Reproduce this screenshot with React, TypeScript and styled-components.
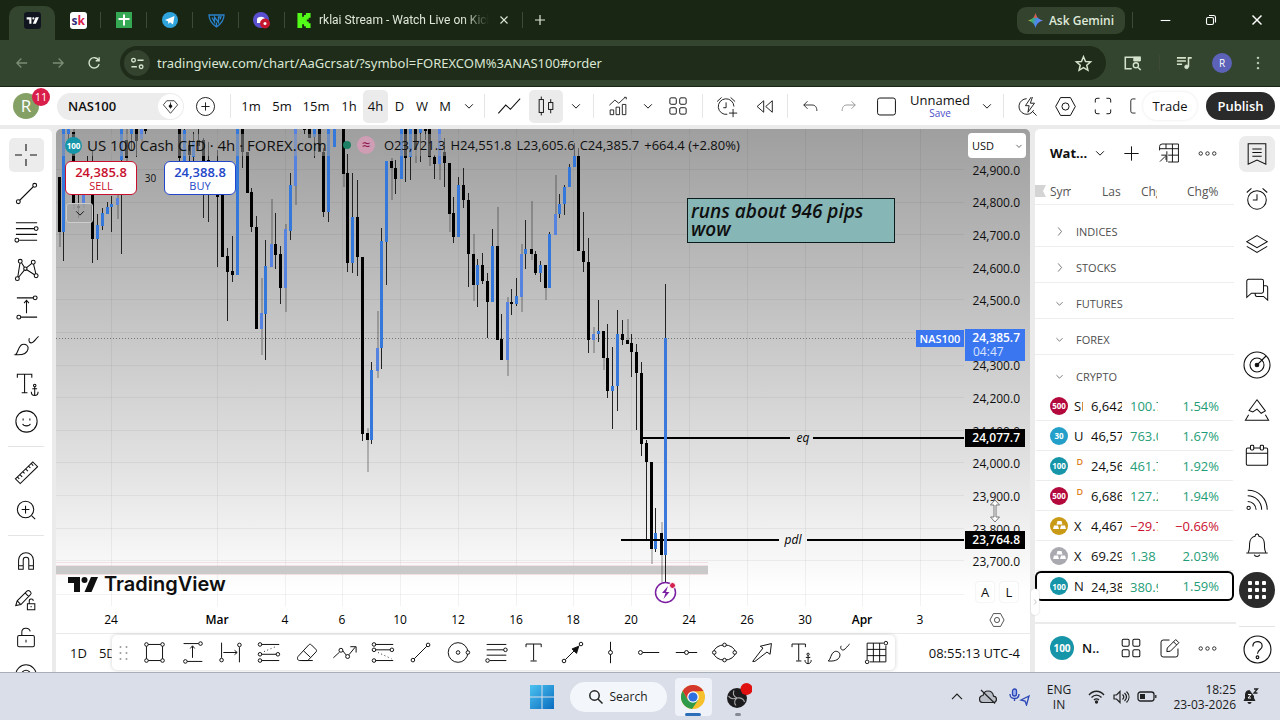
import React from "react";
import styled, { createGlobalStyle } from "styled-components";

const Global = createGlobalStyle`
  *, *::before, *::after { box-sizing: border-box; }
  html, body { margin: 0; padding: 0; }
  body { font-family: "Open Sans", "Noto Sans", sans-serif; color: #0f0f0f; background: #ebebeb; }
  button, select, input { font: inherit; color: inherit; }
  h1, h2, p { margin: 0; font: inherit; }
`;

/* ---------- shared parts ---------- */

const Shell = styled.div`
  height: 100vh;
  display: flex;
  flex-direction: column;
  overflow: hidden;
`;

const PlainButton = styled.button`
  display: inline-flex;
  align-items: center;
  justify-content: center;
  padding: 0;
  border: 0;
  background: none;
  flex: none;
`;

const Spacer = styled.div`
  flex: 1;
`;

const Glyph = styled.svg<{ $w: number }>`
  display: block;
  flex: none;
  width: ${(p) => p.$w}px;
  height: ${(p) => p.$w}px;
  fill: none;
  stroke: currentColor;
  stroke-width: 1.1;
  overflow: visible;
`;

const shapes: Record<string, React.ReactNode> = {
  cross: <path d="M14 3v7M14 18v7M3 14h7M18 14h7" />,
  trend: <><circle cx="5.5" cy="22.5" r="2" /><circle cx="22.5" cy="5.500" r="2" /><path d="M7 21 21 7" /></>,
  fib: <><path d="M3 5h22M3 11h19M3 17h22M6.500 23h18.500" /><circle cx="24" cy="11" r="2" /><circle cx="4" cy="23" r="2" /></>,
  pattern: <><path d="M5 21.500 7.200 7.500M9 7.200l2.800 4.500M11.800 14.700 5.800 22M14.200 12l5.300-4.300M21.300 8.500 23.700 18.500M14.300 14.200l8 5.200" /><circle cx="7.500" cy="5.500" r="2" /><circle cx="21" cy="6.500" r="2" /><circle cx="12.800" cy="13.200" r="1.700" /><circle cx="4.500" cy="23.500" r="2" /><circle cx="24" cy="20.500" r="2" /></>,
  measure: <><path d="M4 4h17M14 7v13M11.500 9.500 14 6.500l2.500 3M8 24h17" /><circle cx="23" cy="4" r="2" /><circle cx="6" cy="24" r="2" /></>,
  hmeasure: <><path d="M4 3v17M24 8v17M6 14h15M18.500 11.500 21.500 14l-3 2.500" /><circle cx="4" cy="22.500" r="2" /><circle cx="24" cy="5.500" r="2" /></>,
  brush: <><path d="M2.500 23.500c3-1.500 2.500-8.500 7-10.500 3.500-1.300 7 1.500 6 5-1.300 5-7.500 6-13 5.500ZM17 6.500c-1.500 3 .5 5.500 3 4.500 2.500-1.200 3.500-4 6.500-6.500" /></>,
  text: <path d="M4.500 8V4.500h17V8M13 4.500V23M9.500 23.500h7" />,
  textAnchor: <><path d="M4.500 8V4.500h15V8M12 4.500V23M9 23.500h6" /><path d="M22.500 17.500v9M20 19.500h5M19 22.500c0 2.500 1.500 4 3.500 4s3.500-1.500 3.500-4" /><circle cx="22.500" cy="16" r="1.300" /></>,
  smile: <><circle cx="14" cy="14" r="11" /><path d="M10 16.500c1 2.700 7 2.700 8 0M10.500 11v2M17.500 11v2" /></>,
  ruler: <><path d="m2.500 20.500 18-17.500 5 5-18 17.500ZM7 16l2.500 2.500M10 13l2 2M13 10.200l2.500 2.500M16 7.300l2 2M4.500 18.500l2 2M19 4.500 21 7" /></>,
  zoom: <><circle cx="13" cy="13" r="8.500" /><path d="M13 9v8M9 13h8M19.500 19.500 23 23" /></>,
  magnet: <path d="M6 23V13a8 8 0 0 1 16 0v10h-5V13a3 3 0 0 0-6 0v10ZM6 19h5M17 19h5" />,
  pencilLock: <><path d="m3 21 1.500-5L15 5.500c1-1 2-1 3 0l.8.8c1 1 1 2 0 3L8.500 20 3 21ZM13 7.500l4 4M4.500 16 8 19.500" /><path d="M15.500 19h8v6.500h-8ZM17.500 19v-2.500a2.200 2.200 0 0 1 4.400-.5M19.500 21.500v1.500" /></>,
  lock: <><rect x="5" y="12.500" width="18" height="12" rx="1.500" /><path d="M9.500 12.500V8.500c0-5 8-5.500 9-.500M14 17v3" /></>,
  eye: <><circle cx="14" cy="14" r="11" /><circle cx="14" cy="14" r="5" /></>,
  chevron: <path d="m9.500 12 4.500 4.500 4.500-4.500" />,
  chevronRight: <path d="m12 8 5 6-5 6" />,
  chevronUp: <path d="m7 17 7-7 7 7" strokeWidth="1.600" />,
  plusCircle: <><circle cx="14" cy="14" r="11" /><path d="M14 9v10M9 14h10" /></>,
  plus: <path d="M14 6v16M6 14h16" />,
  gem: <><path d="M8.500 5.500h11l5 6L14 24 3.500 11.500ZM14 8v9" /><circle cx="14" cy="13.500" r="2" fill="currentColor" /></>,
  line: <path d="m2.500 22 8-9 5 4.500L26 6" />,
  candles: <><path d="M8.500 3v3.500M8.500 21.500V25M19.500 6v4M19.500 18v4.500" /><rect x="6" y="6.500" width="5" height="15" /><rect x="17" y="10" width="5" height="8" /></>,
  indicators: <><path d="M3 13 10 6.500l5 4L23 3M22 3h2.500v2.500" /><path d="M4 25v-6h4.500v6ZM11.500 25v-9.500H16V25ZM19.500 25V12H24v13Z" /></>,
  grid: <><rect x="4.500" y="4.500" width="7.500" height="7.500" rx="1.500" /><rect x="16" y="4.500" width="7.500" height="7.500" rx="1.500" /><rect x="4.500" y="16" width="7.500" height="7.500" rx="1.500" /><rect x="16" y="16" width="7.500" height="7.500" rx="1.500" /></>,
  alarm: <><circle cx="14" cy="15" r="10" /><path d="M14 9v6H9.500M3 7l5-4.500M25 7l-5-4.500" /></>,
  alarmPlus: <><path d="M23 14a9.500 9.500 0 1 0-8 9.500M13.500 9v6.500H10M2.500 8 8 3M24.500 8 19 3M22 17v10M17 22h10" /></>,
  rewind: <path d="M13 7v14L5 14ZM23.500 7v14l-8-7Z" />,
  undo: <path d="M10 7 5 12l5 5M5 12h11c4.500 0 6.500 3 6.500 8" />,
  redo: <path d="m18 7 5 5-5 5M23 12H12c-4.500 0-6.500 3-6.500 8" />,
  square: <rect x="4" y="4.500" width="20" height="19" rx="2.500" />,
  quick: <><path d="M13 4.500a9.500 9.500 0 1 0 8.500 14M20 20l5 5" /><path d="M18.500 2.500 11.500 13h4.500l-1.500 8 8-11h-5l2.500-7.500" /></>,
  hex: <><path d="M8.500 4h11L25 14l-5.500 10h-11L3 14Z" /><circle cx="14" cy="14" r="4" /></>,
  full: <path d="M5 10V7a2 2 0 0 1 2-2h3M18 5h3a2 2 0 0 1 2 2v3M23 18v3a2 2 0 0 1-2 2h-3M10 23H7a2 2 0 0 1-2-2v-3" />,
  camera: <path d="M21 5h-3.500A2.500 2.500 0 0 0 15 7.500v13a2.500 2.500 0 0 0 2.500 2.500H21" />,
  rect: <><path d="M7 5h14M7 23h14M5 7v14M23 7v14" /><circle cx="5" cy="5" r="2" /><circle cx="23" cy="5" r="2" /><circle cx="5" cy="23" r="2" /><circle cx="23" cy="23" r="2" /></>,
  longPos: <><path d="M6 5h20M6 16h17M6 23h20" /><path d="m9 13 14-6" strokeDasharray="1 3" /><circle cx="4.500" cy="5" r="2" /><circle cx="4.500" cy="16" r="2" /><circle cx="24.500" cy="16" r="2" /><circle cx="4.500" cy="23" r="2" /></>,
  shortPos: <><path d="M6 5h20M6 11h17M6 23h20" /><path d="m9 14 15 7" strokeDasharray="1 3" /><circle cx="4.500" cy="5" r="2" /><circle cx="4.500" cy="11" r="2" /><circle cx="24.500" cy="11" r="2" /><circle cx="4.500" cy="23" r="2" /></>,
  eraser: <path d="m4.500 18.500 12-13c1-1 2-1 3 0l5 5c1 1 1 2 0 3l-9 9.500H6.500c-3 0-3-3-2-4.500ZM10.500 12l8 7.500M9 23h12" />,
  path: <><path d="m1.500 20 7-6.500M12 12l4 5M19 16.500 26 8M20.500 7.500H27V14" /><circle cx="10" cy="11.500" r="2.200" /><circle cx="17.500" cy="18.500" r="2.200" /></>,
  circle: <><circle cx="13.500" cy="14" r="11" /><circle cx="13.500" cy="14" r="2" /><circle cx="24.500" cy="14" r="2" fill="#fff" /></>,
  arrow: <><path d="m6 22 12-12M22 6l-1 1" /><path d="M21 7l-2.500 8-5-5Z" fill="currentColor" /><circle cx="4.500" cy="23.500" r="2" /><circle cx="23.500" cy="4.500" r="2" /></>,
  vline: <><path d="M14 2v10M14 16v10" /><circle cx="14" cy="14" r="2.200" /></>,
  hray: <><path d="M7.500 14H26" /><circle cx="5" cy="14" r="2.200" /></>,
  hline: <><path d="M2 14h10M16 14h10" /><circle cx="14" cy="14" r="2.200" /></>,
  ellipse: <><ellipse cx="14" cy="14" rx="12" ry="8.500" /><circle cx="14" cy="5.500" r="2" fill="#fff" /><circle cx="14" cy="22.500" r="2" fill="#fff" /><circle cx="2.500" cy="14" r="2" fill="#fff" /><circle cx="25.500" cy="14" r="2" fill="#fff" /></>,
  bigArrow: <path d="M3 24 14.500 9l-3-2L24 4l-1.500 12-3.500-2.500L5.500 24 3 24Z" />,
  table: <><path d="M3.500 3.500H22M3.500 3.500V22M3.500 10.500h21M3.500 17.500h21M10.500 3.500v21M17.500 3.500v21M24.500 6.500v18H6.500" /><circle cx="24.500" cy="3.500" r="2" fill="#fff" /><circle cx="3.500" cy="24.500" r="2" fill="#fff" /></>,
  sheet: <><path d="M3 11V6.500A3 3 0 0 1 6 3.500h19v21H13M3 9h22M10.500 3.500V9M18 3.500v21M13 16.500h12M11.500 12v12.500M3.500 24l6-6M5 16.500h5.500V22" /></>,
  dots: <><circle cx="5" cy="14" r="2.300" /><circle cx="14" cy="14" r="2.300" /><circle cx="23" cy="14" r="2.300" /></>,
  list: <path d="M4.500 3h19v22L14 20.500 4.500 25ZM9 8.500h10M9 12.500h10M9 16.500h10" />,
  layers: <path d="m14 5 11 6.500L14 18 3 11.500ZM3 16.500 14 23l11-6.500" />,
  chat: <path d="M5 3.500h14a2 2 0 0 1 2 2v11a2 2 0 0 1-2 2H8L3 23V5.500a2 2 0 0 1 2-2ZM21 10.500h2.500c1 0 2 .5 2 2V26L21 22h-7c-1 0-2-1-2-3" />,
  target: <><circle cx="14" cy="14" r="13" /><circle cx="14" cy="14" r="7" /><circle cx="14" cy="14" r="1.800" fill="currentColor" /><path d="m14 14 9-9" /></>,
  pyramid: <path d="m14 3 9 12-4.500 2.500L14 13l-4.500 3-4-1.500ZM5 19l-3.500 6h25L23 19" />,
  calendar: <><path d="M4 6.500h3M10.500 6.500h7M21 6.500h3a1.500 1.500 0 0 1 1.500 1.500v15.500A1.500 1.500 0 0 1 24 25H4a1.500 1.500 0 0 1-1.500-1.500V8A1.500 1.500 0 0 1 4 6.500M2.500 12h23" /><rect x="7" y="3.500" width="3.500" height="5" rx="1" /><rect x="17.500" y="3.500" width="3.500" height="5" rx="1" /></>,
  feed: <><path d="M4 3.500c12 0 21 9 21 21M4 9.500c8 0 15 6 15 15M4 15.500c5 0 9 4 9 9" /><circle cx="5" cy="22.500" r="1.800" /></>,
  bell: <path d="M2.500 22.500h23M4.500 22c1.500-2 1.500-4 1.500-9 0-5 3-8 6-8.500 0-3 4-3 4 0 3 .5 6 3.500 6 8.500 0 5 0 7 1.500 9M11 24.500c1 2.500 5 2.500 6 0" />,
  help: <><circle cx="14" cy="14" r="13" /><path d="M9.500 11c0-6 9-6 9-.500 0 4-4.500 3.500-4.500 7.500" /><circle cx="14" cy="21.500" r="1.300" /></>,
  edit: <path d="M14 4.500H7A2.500 2.500 0 0 0 4.500 7v14A2.500 2.500 0 0 0 7 23.500h14a2.500 2.500 0 0 0 2.500-2.500v-7M11 17.500l.5-4L21 4l3.500 3.500-9.500 9.500ZM18.500 6.500 22 10" />,
  back: <path d="M22 14H6M13 7l-7 7 7 7" strokeWidth="2" />,
  forward: <path d="M6 14h16M15 7l7 7-7 7" strokeWidth="2" />,
  reload: <path d="M22 9a9 9 0 1 0 1 7M23 4v6h-6" strokeWidth="2.400" />,
  tune: <><path d="M14 8.500h10M4 19.500h9" strokeWidth="2.400" /><circle cx="7.500" cy="8.500" r="3" strokeWidth="2.200" /><circle cx="20" cy="19.500" r="3" strokeWidth="2.200" /></>,
  star: <path d="m14 4 3 7 7.500.6-5.700 5 1.700 7.400L14 20l-6.500 4 1.700-7.400-5.700-5 7.500-.6Z" strokeWidth="2.200" />,
  sidesearch: <><path d="M12 23H2V5h23v6" strokeWidth="2.400" /><path d="M15 5h10v6H15Z" fill="currentColor" /><circle cx="18.500" cy="17.500" r="4" strokeWidth="2.200" /><path d="m22 21 4 4" strokeWidth="2.400" /></>,
  music: <><path d="M3 6h14M3 11h14M3 16h8M21 20V6h5" strokeWidth="2.400" /><circle cx="18" cy="20" r="3" fill="currentColor" /></>,
  kebab: <><circle cx="14" cy="5" r="1.500" fill="currentColor" /><circle cx="14" cy="14" r="1.500" fill="currentColor" /><circle cx="14" cy="23" r="1.500" fill="currentColor" /></>,
  close: <path d="m7 7 14 14M21 7 7 21" strokeWidth="2.200" />,
  add: <path d="M14 4v20M4 14h20" strokeWidth="2.400" />,
  min: <path d="M5 14h18" strokeWidth="2" />,
  restore: <><rect x="5" y="9" width="14" height="14" rx="3" strokeWidth="2.200" /><path d="M10 5h9a4 4 0 0 1 4 4v10" strokeWidth="2.200" /></>,
};

const Icon = ({ name, w = 28 }: { name: string; w?: number }) => (
  <Glyph viewBox="0 0 28 28" $w={w} aria-hidden="true">{shapes[name]}</Glyph>
);

/* ---------- browser chrome ---------- */

const TabStrip = styled.header`
  flex: none;
  height: 40px;
  display: flex;
  align-items: center;
  padding-left: 9px;
  background: #192614;
  color: #dfe8d9;
`;

const Tab = styled.button<{ $active?: boolean }>`
  flex: none;
  position: relative;
  width: 46px;
  height: ${(p) => (p.$active ? 34 : 24)}px;
  align-self: ${(p) => (p.$active ? "flex-end" : "center")};
  display: flex;
  align-items: center;
  justify-content: center;
  padding: 0;
  padding-bottom: ${(p) => (p.$active ? 6 : 0)}px;
  border: 0;
  border-radius: 10px 10px 0 0;
  background: ${(p) => (p.$active ? "#33452e" : "none")};
`;

const WideTab = styled.div`
  display: flex;
  align-items: center;
  gap: 8px;
  width: 238px;
  padding: 0 12px;
  font-family: Roboto, "Open Sans", sans-serif;
  font-size: 12px;
`;

const TabTitle = styled.span`
  flex: 1;
  overflow: hidden;
  white-space: nowrap;
  -webkit-mask-image: linear-gradient(90deg, #000 85%, transparent);
  mask-image: linear-gradient(90deg, #000 85%, transparent);
`;

const TabDivider = styled.i`
  flex: none;
  width: 1px;
  height: 16px;
  margin-left: -1px;
  background: #3c4a37;
`;

const NewTab = styled(PlainButton)`
  width: 34px;
  height: 28px;
`;

const Gemini = styled(PlainButton)`
  gap: 6px;
  height: 27px;
  width: 108px;
  margin-right: 8px;
  border-radius: 9px;
  background: #33432e;
  font-size: 12px;
  font-weight: 600;
`;

const WindowButtons = styled.div`
  display: flex;
  margin-left: 9px;
`;

const WindowButton = styled(PlainButton)`
  width: 46px;
  height: 40px;
  color: #fff;
`;

const AddressRow = styled.div`
  flex: none;
  height: 47px;
  display: flex;
  align-items: center;
  padding: 0 4px;
  background: #33452e;
  border-bottom: 1px solid #192614;
  color: #d5e3cd;
`;

const NavButton = styled(PlainButton)<{ $dim?: boolean; $w?: number }>`
  width: ${(p) => p.$w || 36}px;
  height: 34px;
  opacity: ${(p) => (p.$dim ? 0.45 : 1)};
`;

const UrlBox = styled.div`
  flex: 1;
  display: flex;
  align-items: center;
  height: 34px;
  margin-left: 8px;
  padding: 0 13px 0 4px;
  gap: 7px;
  border-radius: 17px;
  background: #1e2c19;
`;

const SiteInfo = styled(PlainButton)`
  width: 26px;
  height: 26px;
  border-radius: 13px;
  background: #33432e;
`;

const UrlInput = styled.input`
  flex: 1;
  min-width: 0;
  padding: 0;
  border: 0;
  outline: 0;
  background: none;
  color: #dbe6d4;
  font-family: "Noto Sans", sans-serif;
  font-size: 13px;
`;

const Profile = styled(PlainButton)`
  width: 20px;
  height: 20px;
  margin: 0 8px 0 4px;
  border-radius: 10px;
  background: #5b62b8;
  color: #fff;
  font-size: 10px;
`;

/* ---------- chart app header ---------- */

const TopBar = styled.nav`
  flex: none;
  height: 38px;
  display: flex;
  align-items: center;
  background: #fff;
  margin-bottom: 4px;
  font-size: 13px;
`;

const AvatarSlot = styled.div`
  position: relative;
  width: 57px;
  padding-left: 13px;
`;

const Avatar = styled.div`
  width: 26px;
  height: 26px;
  border-radius: 13px;
  background: #84a064;
  color: #fff;
  font-size: 17px;
  line-height: 26px;
  text-align: center;
`;

const Count = styled.span`
  position: absolute;
  left: 32px;
  top: -5px;
  width: 18px;
  height: 18px;
  border-radius: 9px;
  background: #d91e4a;
  color: #fff;
  font-size: 11px;
  line-height: 18px;
  text-align: center;
`;

const SymbolPill = styled(PlainButton)`
  width: 127px;
  height: 27px;
  justify-content: space-between;
  padding: 0 1px 0 11px;
  border-radius: 14px;
  background: #ececec;
  font-size: 13px;
  font-weight: 600;
`;

const GemCircle = styled.span`
  display: flex;
  align-items: center;
  justify-content: center;
  width: 25px;
  height: 25px;
  border-radius: 13px;
  background: #fff;
`;

const BarButton = styled(PlainButton)<{ $w: number; $on?: boolean; $dim?: boolean }>`
  width: ${(p) => p.$w}px;
  height: 33px;
  border-radius: 5px;
  background: ${(p) => (p.$on ? "#ebebeb" : "none")};
  opacity: ${(p) => (p.$dim ? 0.5 : 1)};
`;

const BarDivider = styled.i`
  flex: none;
  width: 1px;
  height: 24px;
  margin: 0 4px;
  background: #e6e6e6;
`;

const LayoutName = styled(PlainButton)`
  flex-direction: column;
  width: 70px;
  font-size: 13px;
  line-height: 14px;
`;

const SaveText = styled.span`
  color: #4a4ec8;
  font-size: 10px;
  line-height: 12px;
`;

const Trade = styled(PlainButton)`
  width: 54px;
  height: 28px;
  margin: 0 9px 0 5px;
  border-radius: 14px;
  box-shadow: 0 0 3px #e4e4e4;
  font-size: 13px;
`;

const Publish = styled(PlainButton)`
  width: 69px;
  height: 28px;
  margin-right: 5px;
  border-radius: 14px;
  background: #2a2a2a;
  color: #fff;
  font-size: 13px;
  font-weight: 600;
`;

/* ---------- body ---------- */

const Body = styled.main`
  flex: 1;
  min-height: 0;
  display: flex;
`;

const LeftTools = styled.aside`
  flex: none;
  width: 52px;
  margin-right: 4px;
  padding-top: 7px;
  display: flex;
  flex-direction: column;
  align-items: center;
  overflow: hidden;
  background: #fff;
  border-top-right-radius: 5px;
`;

const ToolSlot = styled.div`
  flex: none;
  height: 38px;
  display: flex;
  align-items: center;
`;

const Tool = styled(PlainButton)<{ $on?: boolean }>`
  width: 35px;
  height: 34px;
  border-radius: 5px;
  background: ${(p) => (p.$on ? "#ececec" : "none")};
`;

const Rule = styled.i<{ $tight?: boolean }>`
  flex: none;
  width: 36px;
  height: 1px;
  margin: ${(p) => (p.$tight ? 0 : 6)}px 0;
  background: #e4e4e4;
`;

const ChartColumn = styled.section`
  flex: 1;
  min-width: 0;
  margin-right: 5px;
  display: flex;
  flex-direction: column;
  overflow: hidden;
  border-radius: 5px 5px 0 0;
  background: #fff;
`;

const Stage = styled.div`
  flex: 1;
  min-height: 0;
  position: relative;
  display: flex;
  background: linear-gradient(#9f9f9f, #c9c9c9 45%, #e1e1e1 70%, #ffffff 97%);
`;

const Plot = styled.div`
  flex: 1;
  min-width: 0;
  position: relative;
`;

const PlotSvg = styled.svg`
  display: block;
  width: 100%;
  height: 100%;
`;

const PriceAxis = styled.div`
  position: relative;
  flex: none;
  width: 66px;
  font-size: 12px;
`;

const Currency = styled.select`
  display: block;
  appearance: none;
  width: 58px;
  height: 25px;
  margin: 4px 0 0 4px;
  padding: 0 4px;
  border: 0;
  border-radius: 4px;
  background: #fff;
  font-size: 11px;
`;

const CurrencyArrow = styled.span`
  position: absolute;
  left: 47px;
  top: 9px;
  pointer-events: none;
`;

const PriceTicks = styled.ol`
  list-style: none;
  margin: -4px 0 0;
  padding: 0 10px 0 0;
  height: 424px;
  display: flex;
  flex-direction: column;
`;

const PriceTick = styled.li`
  flex: 1;
  display: flex;
  align-items: center;
  justify-content: flex-end;
`;

const PriceTag = styled.div<{ $top: number; $fill: string }>`
  position: absolute;
  left: 1px;
  top: ${(p) => p.$top}px;
  width: 60px;
  padding: 2px 5px 2px 0;
  background: ${(p) => p.$fill};
  color: #fff;
  font-weight: 600;
  line-height: 14px;
  text-align: right;
`;

const Countdown = styled.div`
  padding-left: 8px;
  color: #d9e4ff;
  font-weight: 400;
  text-align: left;
`;

const NameTag = styled.div`
  position: absolute;
  right: 0;
  top: 201px;
  width: 48px;
  height: 17px;
  background: #3a76f0;
  color: #fff;
  font-size: 11px;
  font-weight: 600;
  line-height: 17px;
  text-align: center;
`;

const ScaleModes = styled.div`
  position: absolute;
  left: 12px;
  bottom: 4px;
  display: flex;
  gap: 6px;
`;

const ScaleMode = styled(PlainButton)`
  width: 18px;
  height: 20px;
  border-radius: 3px;
  background: #fff;
  box-shadow: 0 0 2px #ddd;
  font-size: 13px;
`;

const ResizeCursor = styled.svg`
  position: absolute;
  left: 25px;
  top: 370px;
`;

const Legend = styled.div`
  position: absolute;
  left: 6px;
  top: 5px;
  display: flex;
  align-items: center;
  height: 22px;
`;

const LegendTitle = styled.h1`
  display: flex;
  align-items: center;
  gap: 5px;
  width: 268px;
  height: 22px;
  padding-left: 3px;
  white-space: nowrap;
  background: rgba(162, 162, 162, 0.5);
  font-size: 15px;
`;

const Badge = styled.span<{ $fill: string; $d: number }>`
  flex: none;
  display: inline-flex;
  align-items: center;
  justify-content: center;
  width: ${(p) => p.$d}px;
  height: ${(p) => p.$d}px;
  border-radius: 50%;
  background: ${(p) => p.$fill};
  color: #fff;
  font-size: ${(p) => (p.$d > 20 ? 10 : 8)}px;
  font-weight: 700;
`;

const MarketDot = styled.i`
  width: 8px;
  height: 8px;
  margin: 0 6px 0 13px;
  border-radius: 4px;
  background: #1d7f63;
`;

const Approx = styled.span`
  width: 18px;
  height: 18px;
  margin-right: 8px;
  border-radius: 9px;
  background: #cf9db4;
  color: #8d0f4b;
  font-size: 15px;
  line-height: 17px;
  text-align: center;
`;

const Ohlc = styled.p`
  display: flex;
  gap: 5px;
  height: 22px;
  padding: 0 1px;
  background: rgba(162, 162, 162, 0.5);
  font-size: 13px;
  line-height: 22px;
  white-space: nowrap;
`;

const OrderRow = styled.div`
  position: absolute;
  left: 9px;
  top: 32px;
  display: flex;
  align-items: center;
`;

const OrderButton = styled(PlainButton)<{ $tone: string }>`
  flex-direction: column;
  width: 72px;
  height: 34px;
  border: 1px solid ${(p) => p.$tone};
  border-radius: 6px;
  background: #fff;
  color: ${(p) => p.$tone};
  font-size: 11px;
  line-height: 13px;
`;

const OrderPrice = styled.span`
  font-size: 13px;
  font-weight: 600;
  line-height: 14px;
`;

const Spread = styled.span`
  width: 27px;
  text-align: center;
  font-size: 10px;
`;

const Collapse = styled(PlainButton)`
  position: absolute;
  left: 10px;
  top: 74px;
  width: 27px;
  height: 20px;
  border: 1px solid #cdcdcd;
  border-radius: 3px;
  background: rgba(162, 162, 162, 0.8);
`;

const Note = styled.p`
  position: absolute;
  left: 631px;
  top: 69px;
  width: 208px;
  height: 45px;
  padding: 3px;
  border: 1px solid #0c1c1c;
  background: #86b6b6;
  font-size: 19px;
  font-weight: 600;
  font-style: italic;
  line-height: 18px;
  white-space: nowrap;
`;

const Brand = styled.a`
  position: absolute;
  left: 12px;
  bottom: 9px;
  display: flex;
  align-items: center;
  gap: 6px;
  color: #0f0f0f;
  text-decoration: none;
  font-family: Inter, "Open Sans", sans-serif;
  font-size: 20px;
  font-weight: 600;
  line-height: 26px;
`;

const TimeAxis = styled.div`
  flex: none;
  height: 28px;
  display: flex;
  border-bottom: 1px solid #e9e9e9;
`;

const TimeSvg = styled.svg`
  flex: 1;
  height: 28px;
  font-size: 12px;
`;

const TimeSettings = styled(PlainButton)`
  width: 66px;
`;

const RangeBar = styled.div`
  flex: none;
  height: 38px;
  position: relative;
  display: flex;
  align-items: center;
  padding: 0 10px 0 14px;
  gap: 12px;
  font-size: 13px;
`;

const Favorites = styled.div`
  position: absolute;
  left: 56px;
  top: 1px;
  height: 35px;
  display: flex;
  align-items: center;
  padding-left: 6px;
  border-radius: 5px;
  background: #fff;
  box-shadow: 0 0 4px #cfcfcf;
`;

const Favorite = styled(PlainButton)`
  width: 38px;
  height: 34px;
`;

const Grip = styled.svg`
  width: 17px;
  height: 16px;
  fill: #9a9a9a;
`;

/* ---------- watchlist ---------- */

const Watch = styled.section`
  position: relative;
  flex: none;
  width: 201px;
  display: flex;
  flex-direction: column;
  background: #fff;
  border-top-left-radius: 5px;
`;

const WatchHead = styled.div`
  height: 48px;
  display: flex;
  align-items: center;
  padding-left: 15px;
`;

const WatchName = styled(PlainButton)`
  width: 62px;
  justify-content: space-between;
  font-size: 13px;
  font-weight: 700;
`;

const WatchButton = styled(PlainButton)`
  width: 38px;
  height: 30px;
`;

const Quotes = styled.table`
  width: 199px;
  table-layout: fixed;
  border-collapse: separate;
  border-spacing: 0;
  font-size: 13px;
  th { font-weight: 400; text-align: left; padding: 0; }
  td { padding: 0; }
`;

const HeadRow = styled.tr`
  color: #555;
  font-size: 12px;
  th { height: 28px; border-bottom: 1px solid #eee; }
`;

const ColumnFlag = styled.svg`
  vertical-align: middle;
`;

const Clip = styled.span<{ $w: number; $x?: number }>`
  display: inline-block;
  vertical-align: middle;
  width: ${(p) => p.$w}px;
  margin-left: ${(p) => p.$x || 0}px;
  overflow: hidden;
  white-space: nowrap;
  text-overflow: clip;
`;

const GroupRow = styled.tr<{ $last?: boolean }>`
  th {
    height: 36px;
    border-bottom: ${(p) => (p.$last ? 0 : 1)}px solid #eee;
    color: #4e4e4e;
    font-size: 11px;
  }
`;

const GroupToggle = styled(PlainButton)`
  gap: 7px;
  padding: 9px 0 0 15px;
`;

const QuoteRow = styled.tr<{ $selected?: boolean; $tone: string }>`
  td {
    height: 30px;
    border-bottom: ${(p) => (p.$selected ? "2px solid #000" : "1px solid #ececec")};
    border-top: ${(p) => (p.$selected ? "2px solid #000" : "0")};
  }
  td:first-child {
    border-left: 2px solid ${(p) => (p.$selected ? "#000" : "transparent")};
    border-radius: ${(p) => (p.$selected ? "6px 0 0 6px" : "0")};
  }
  td:last-child {
    border-right: 2px solid ${(p) => (p.$selected ? "#000" : "transparent")};
    border-radius: ${(p) => (p.$selected ? "0 6px 6px 0" : "0")};
    padding-right: 13px;
    text-align: right;
  }
  td:nth-child(n + 3) { color: ${(p) => p.$tone}; }
`;

const SymbolCell = styled.div`
  display: flex;
  align-items: center;
  gap: 6px;
  padding-left: 13px;
`;

const Delayed = styled.sup`
  width: 9px;
  color: #e0801c;
  font-size: 9px;
  font-weight: 600;
  line-height: 10px;
  text-align: right;
  align-self: flex-start;
`;

const Handle = styled(PlainButton)`
  position: absolute;
  left: -4px;
  top: 460px;
  width: 8px;
  height: 26px;
  border-radius: 4px;
  background: #fff;
  box-shadow: 0 0 2px #ccc;
  color: #888;
`;

const WatchFoot = styled.div`
  display: flex;
  align-items: center;
  height: 50px;
  margin-top: auto;
  border-top: 2px solid #ebebeb;
  padding-left: 15px;
  font-size: 13px;
  font-weight: 600;
`;

const FootName = styled.span`
  width: 38px;
  padding-left: 8px;
`;

const RightTools = styled.aside`
  flex: none;
  width: 44px;
  display: flex;
  flex-direction: column;
  align-items: center;
  padding-top: 2px;
  padding-right: 2px;
  background: #fff;
`;

const SideSlot = styled.div<{ $gap?: boolean }>`
  flex: none;
  height: 45px;
  margin-top: ${(p) => (p.$gap ? 31 : 0)}px;
  display: flex;
  align-items: center;
`;

const SideTool = styled(PlainButton)<{ $on?: boolean; $dark?: boolean }>`
  width: 36px;
  height: 36px;
  border-radius: ${(p) => (p.$dark ? 18 : 7)}px;
  background: ${(p) => (p.$dark ? "#2b2b2b" : p.$on ? "#ececec" : "none")};
`;

/* ---------- OS task bar ---------- */

const TaskBar = styled.footer`
  flex: none;
  height: 48px;
  display: grid;
  grid-template-columns: 1fr auto 1fr;
  align-items: center;
  background: #d9dee9;
  border-top: 1px solid #a9adb6;
  font-size: 12px;
  color: #1b1b1b;
`;

const TaskGroup = styled.div`
  grid-column: 2;
  display: flex;
  align-items: center;
  gap: 8px;
  padding-left: 6px;
`;

const SearchBox = styled(PlainButton)`
  gap: 7px;
  width: 97px;
  height: 30px;
  margin-left: 8px;
  border-radius: 15px;
  background: #f3f6fa;
`;

const TaskApp = styled(PlainButton)<{ $on?: boolean }>`
  position: relative;
  width: 37px;
  height: 38px;
  border-radius: 4px;
  background: ${(p) => (p.$on ? "#eff2f8" : "none")};
  &::after {
    content: "";
    position: absolute;
    bottom: 0;
    width: ${(p) => (p.$on ? 16 : 6)}px;
    height: 3px;
    border-radius: 2px;
    background: ${(p) => (p.$on ? "#2c6fb8" : "#858a93")};
  }
`;

const Tray = styled.div`
  grid-column: 3;
  justify-self: end;
  display: flex;
  align-items: center;
  padding-right: 14px;
`;

const TrayIcon = styled(PlainButton)<{ $w: number }>`
  width: ${(p) => p.$w}px;
  height: 30px;
`;

const TrayText = styled.div<{ $w: number; $end?: boolean }>`
  width: ${(p) => p.$w}px;
  text-align: ${(p) => (p.$end ? "right" : "center")};
  line-height: 15px;
`;

/* ---------- data ---------- */

/* x, wick top, body top, body bottom, wick bottom, rising, soft wick */
type Candle = [number, number, number, number, number, 0 | 1, (0 | 1)?];

const candles: Candle[] = [
  [59, 177, 177, 232, 247, 0, 1], [63, 129, 129, 232, 261, 1], [68, 129, 129, 134, 140, 1],
  [73, 129, 132, 203, 209, 0, 1], [78, 190, 206, 208, 218, 0], [83, 175, 195, 205, 208, 1, 1],
  [87, 156, 163, 166, 180, 0], [92, 150, 190, 239, 263, 0], [97, 214, 225, 239, 260, 1],
  [102, 208, 213, 226, 230, 1], [107, 202, 207, 214, 214, 1], [111, 196, 204, 207, 232, 1],
  [117, 190, 198, 205, 219, 1, 1], [121, 129, 129, 160, 254, 1], [126, 129, 140, 158, 170, 0, 1],
  [131, 129, 129, 134, 150, 1], [136, 129, 129, 141, 157, 0], [141, 129, 129, 139, 142, 1, 1],
  [145, 129, 129, 131, 134, 0], [179, 129, 129, 158, 180, 0], [184, 129, 130, 162, 170, 1],
  [189, 140, 145, 155, 165, 0], [193, 132, 142, 157, 165, 1], [198, 129, 140, 146, 150, 0],
  [203, 138, 140, 162, 218, 0], [208, 142, 160, 166, 222, 0],
  [217, 150, 195, 197, 267, 0], [222, 190, 193, 257, 257, 0], [227, 248, 256, 272, 321, 0],
  [232, 236, 271, 275, 282, 0], [237, 129, 129, 275, 275, 1], [242, 129, 129, 152, 168, 0],
  [247, 152, 152, 193, 193, 0], [251, 188, 192, 227, 232, 0], [256, 216, 227, 329, 329, 0],
  [261, 278, 313, 329, 355, 1, 1], [265, 240, 266, 314, 360, 1], [271, 199, 244, 267, 267, 1, 1],
  [275, 213, 244, 255, 269, 0], [280, 246, 254, 288, 304, 0], [285, 224, 229, 288, 312, 1, 1],
  [290, 173, 185, 231, 240, 1], [295, 129, 129, 186, 205, 1, 1], [304, 129, 129, 130, 134, 0],
  [309, 129, 129, 138, 138, 0], [314, 129, 129, 137, 158, 1], [319, 129, 129, 152, 152, 0],
  [323, 148, 152, 212, 217, 0], [328, 129, 129, 212, 222, 1], [334, 129, 129, 147, 147, 1],
  [343, 129, 129, 174, 187, 0, 1], [347, 154, 173, 263, 272, 0], [352, 173, 217, 263, 273, 1],
  [357, 180, 217, 257, 276, 0], [362, 257, 257, 434, 441, 0], [367, 428, 433, 440, 472, 0, 1],
  [371, 362, 370, 440, 444, 1], [377, 311, 348, 371, 378, 1, 1], [381, 228, 241, 348, 369, 1],
  [386, 161, 161, 242, 285, 1], [391, 158, 161, 168, 200, 0, 1], [395, 160, 168, 179, 194, 0],
  [401, 129, 129, 179, 179, 1], [405, 129, 129, 158, 182, 0], [410, 129, 129, 157, 180, 1],
  [415, 129, 129, 150, 163, 0, 1], [420, 129, 129, 133, 162, 1], [425, 129, 129, 131, 140, 0],
  [429, 129, 129, 157, 166, 0, 1], [434, 155, 157, 164, 179, 0], [439, 129, 129, 164, 180, 1, 1],
  [444, 138, 152, 163, 187, 0], [449, 163, 163, 214, 232, 0, 1], [453, 197, 213, 237, 243, 0],
  [458, 177, 185, 237, 237, 1], [463, 168, 185, 200, 208, 0], [468, 193, 200, 254, 287, 0],
  [473, 234, 254, 285, 301, 0, 1], [477, 259, 265, 285, 307, 1], [482, 253, 265, 281, 284, 0],
  [487, 273, 281, 302, 338, 0], [492, 229, 246, 302, 302, 1], [497, 207, 246, 340, 340, 0, 1],
  [501, 314, 339, 360, 360, 0], [507, 297, 302, 360, 376, 1, 1], [511, 289, 302, 304, 315, 0],
  [516, 278, 296, 304, 306, 1], [521, 244, 254, 297, 312, 1, 1], [525, 220, 249, 254, 269, 1],
  [531, 201, 249, 254, 260, 0, 1], [535, 251, 254, 273, 275, 0], [540, 261, 265, 273, 282, 1],
  [545, 265, 265, 288, 300, 0, 1], [549, 232, 234, 288, 288, 1], [555, 175, 214, 235, 235, 1, 1],
  [559, 194, 204, 214, 218, 1], [564, 185, 187, 204, 215, 1], [569, 164, 167, 187, 187, 1],
  [574, 143, 156, 167, 167, 1], [578, 148, 156, 251, 251, 0], [583, 212, 251, 262, 272, 0],
  [588, 238, 262, 340, 353, 0], [593, 327, 334, 340, 353, 1, 1], [598, 300, 331, 334, 342, 1],
  [603, 331, 331, 358, 370, 0, 1], [607, 324, 358, 391, 398, 0], [612, 347, 386, 391, 429, 1],
  [617, 310, 334, 386, 411, 1], [622, 320, 334, 340, 345, 0], [627, 319, 340, 344, 344, 0, 1],
  [631, 334, 343, 352, 377, 0], [636, 344, 352, 373, 430, 0], [641, 362, 373, 444, 456, 0],
  [646, 440, 443, 462, 540, 0], [651, 462, 462, 549, 564, 0, 1], [655, 508, 533, 549, 552, 1],
  [661, 522, 533, 555, 582, 0, 1], [665, 284, 338, 555, 582, 1],
];

const timeTicks: [number, string][] = [
  [111, "24"], [217, "Mar"], [285, "4"], [342, "6"], [400, "10"], [458, "12"], [516, "16"],
  [573, "18"], [631, "20"], [689, "24"], [747, "26"], [805, "30"], [862, "Apr"], [920, "3"],
];

const priceTicks = Array.from({ length: 13 }, (_, i) => 24900 - i * 100);
const priceText = (v: number) => v.toLocaleString("en-US", { minimumFractionDigits: 1 });

const GREEN = "#1f9d78";
const RED = "#c8102e";

const quotes = [
  { badge: "500", fill: "#b3093c", symbol: "SPX", last: "6,642.5", chg: "100.7", pct: "1.54%", tone: GREEN },
  { badge: "30", fill: "#249fc9", symbol: "US", last: "46,577", chg: "763.0", pct: "1.67%", tone: GREEN },
  { badge: "100", fill: "#1795a8", symbol: "", last: "24,560", chg: "461.7", pct: "1.92%", tone: GREEN, delayed: true },
  { badge: "500", fill: "#b3093c", symbol: "", last: "6,686.2", chg: "127.2", pct: "1.94%", tone: GREEN, delayed: true },
  { badge: "", fill: "#c99a16", symbol: "X", last: "4,467.1", chg: "−29.7", pct: "−0.66%", tone: RED },
  { badge: "", fill: "#a9a9b0", symbol: "X", last: "69.295", chg: "1.38", pct: "2.03%", tone: GREEN },
  { badge: "100", fill: "#1795a8", symbol: "NAS", last: "24,385", chg: "380.9", pct: "1.59%", tone: GREEN, selected: true },
];

const groups = [
  { name: "INDICES", open: false }, { name: "STOCKS", open: false }, { name: "FUTURES", open: true },
  { name: "FOREX", open: true }, { name: "CRYPTO", open: true },
];

const favorites = ["rect", "measure", "hmeasure", "longPos", "eraser", "path", "shortPos", "trend", "circle", "fib",
  "text", "arrow", "vline", "hray", "hline", "ellipse", "bigArrow", "textAnchor", "brush", "table"];

/* ---------- pieces ---------- */

const Mark = ({ w }: { w: number }) => (
  <svg width={w} height={w / 2} viewBox="0 0 30 15" fill="currentColor" aria-hidden="true">
    <path d="M0 0h12v15H6V6H0Z" /><circle cx="16.500" cy="3" r="3" /><path d="M23 0h7l-6.500 15h-7Z" />
  </svg>
);

const Ingots = () => (
  <svg width="13" height="9" viewBox="0 0 13 9" fill="#fff" aria-hidden="true">
    <path d="M4.500 0h4l1 3.500h-6ZM1 4.500h4l1 3.500H0ZM8 4.500h4L13 8H7Z" />
  </svg>
);

const Favicons = () => (
  <>
    <Tab $active aria-label="TradingView">
      <svg width="17" height="17" viewBox="0 0 16 16"><rect width="16" height="16" rx="3" fill="#10151f" /><path d="M2.500 5H7v6H5V7H2.500ZM11 5h3l-2.800 6H8.300Z" fill="#fff" /><circle cx="8.800" cy="6" r="1" fill="#fff" /></svg>
    </Tab>
    <Tab aria-label="sk">
      <svg width="17" height="17" viewBox="0 0 17 17"><rect width="17" height="17" rx="3" fill="#fff" /><text x="1.500" y="13" fontSize="12" fontWeight="700" fill="#35307c">s<tspan fill="#d81e4a">k</tspan></text></svg>
    </Tab>
    <TabDivider />
    <Tab aria-label="Sheets">
      <svg width="16" height="16" viewBox="0 0 16 16"><rect width="16" height="16" fill="#35a853" /><path d="M8 2.500v11M2.500 7h11" stroke="#fff" strokeWidth="2" /></svg>
    </Tab>
    <TabDivider />
    <Tab aria-label="Telegram">
      <svg width="16" height="16" viewBox="0 0 16 16"><circle cx="8" cy="8" r="8" fill="#2fa3dc" /><path d="m3 8 9.500-4L11 12.500 8 10.300 6.500 12 6 9.300Z" fill="#fff" /></svg>
    </Tab>
    <TabDivider />
    <Tab aria-label="Shield">
      <svg width="17" height="16" viewBox="0 0 16 16" fill="none" stroke="#2a82cc" strokeWidth="1.300"><path d="M0.500 3h15c0 5-2.500 8.500-7.500 12C3 11.500.5 8 .5 3ZM3.500 5.500 6 10V5l4 5.500V5h2.500l-1 2.500M8 10.500V14" /></svg>
    </Tab>
    <TabDivider />
    <Tab aria-label="Recorder">
      <svg width="18" height="17" viewBox="0 0 18 17"><circle cx="8" cy="8" r="8" fill="#5a50cf" /><path d="M4 7c1-3 7-3 8 0v4H4Z" fill="#fff" /><circle cx="12" cy="11.500" r="5" fill="#c5172f" /><circle cx="12" cy="11.500" r="1.500" fill="#fff" /></svg>
    </Tab>
    <TabDivider />
  </>
);

const BrowserChrome = () => (
  <>
    <TabStrip>
      <Favicons />
      <WideTab>
        <svg width="14" height="15" viewBox="0 0 14 16" aria-hidden="true"><path d="M0 0h5v4h2V2h2V0h5v5h-2v2h-2v2h2v2h2v5H9v-2H7v-2H5v4H0Z" fill="#53fc18" /></svg>
        <TabTitle>rklai Stream - Watch Live on Kick</TabTitle>
        <PlainButton aria-label="Close tab"><Icon name="close" w={14} /></PlainButton>
      </WideTab>
      <TabDivider />
      <NewTab aria-label="New tab"><Icon name="add" w={14} /></NewTab>
      <Spacer />
      <Gemini>
        <svg width="15" height="17" viewBox="0 0 16 16" aria-hidden="true">
          <defs><linearGradient id="gem" x1="0" y1="0.300" x2="1" y2="0.600"><stop offset="0" stopColor="#f3c623" /><stop offset=".3" stopColor="#3fae6b" /><stop offset=".6" stopColor="#4a86f0" /><stop offset="1" stopColor="#7d8cf5" /></linearGradient></defs>
          <path d="M8 0c1.200 5 3.500 6.800 8 8-4.500 1.200-6.800 3.500-8 8-1.200-4.500-3.500-6.800-8-8 4.500-1.200 6.800-3 8-8Z" fill="url(#gem)" /><path d="M8 0c.5 2.200 1.200 3.800 2.200 5H5.800C6.800 3.800 7.500 2.200 8 0Z" fill="#e8503f" />
        </svg>
        Ask Gemini
      </Gemini>
      <TabDivider />
      <WindowButtons>
        <WindowButton aria-label="Minimize"><Icon name="min" w={15} /></WindowButton>
        <WindowButton aria-label="Restore"><Icon name="restore" w={14} /></WindowButton>
        <WindowButton aria-label="Close"><Icon name="close" w={18} /></WindowButton>
      </WindowButtons>
    </TabStrip>
    <AddressRow>
      <NavButton $dim aria-label="Back"><Icon name="back" w={18} /></NavButton>
      <NavButton $dim aria-label="Forward"><Icon name="forward" w={18} /></NavButton>
      <NavButton aria-label="Reload"><Icon name="reload" w={16} /></NavButton>
      <UrlBox>
        <SiteInfo aria-label="Site information"><Icon name="tune" w={17} /></SiteInfo>
        <UrlInput aria-label="Address" defaultValue="tradingview.com/chart/AaGcrsat/?symbol=FOREXCOM%3ANAS100#order" />
        <PlainButton aria-label="Bookmark"><Icon name="star" w={19} /></PlainButton>
      </UrlBox>
      <NavButton $w={54} aria-label="Search side panel"><Icon name="sidesearch" w={18} /></NavButton>
      <TabDivider />
      <NavButton $w={48} aria-label="Media"><Icon name="music" w={18} /></NavButton>
      <Profile>R</Profile>
      <NavButton aria-label="Menu"><Icon name="kebab" w={16} /></NavButton>
    </AddressRow>
  </>
);

const intervals: [string, number][] = [["1m", 32], ["5m", 30], ["15m", 38], ["1h", 28], ["4h", 25], ["D", 23], ["W", 22], ["M", 24]];

const AppBar = () => (
  <TopBar>
    <AvatarSlot><Avatar>R</Avatar><Count>11</Count></AvatarSlot>
    <SymbolPill>NAS100<GemCircle><Icon name="gem" w={19} /></GemCircle></SymbolPill>
    <BarButton $w={42} aria-label="Compare"><Icon name="plusCircle" w={23} /></BarButton>
    <BarDivider />
    {intervals.map(([t, w]) => <BarButton key={t} $w={w} $on={t === "4h"}>{t}</BarButton>)}
    <BarButton $w={23} aria-label="Intervals"><Icon name="chevron" w={24} /></BarButton>
    <BarDivider />
    <BarButton $w={40} aria-label="Line"><Icon name="line" w={26} /></BarButton>
    <BarButton $w={34} $on aria-label="Candles"><Icon name="candles" w={24} /></BarButton>
    <BarButton $w={26} aria-label="Chart types"><Icon name="chevron" w={24} /></BarButton>
    <BarDivider />
    <BarButton $w={40} aria-label="Indicators"><Icon name="indicators" w={22} /></BarButton>
    <BarButton $w={20} aria-label="Favorite indicators"><Icon name="chevron" w={24} /></BarButton>
    <BarButton $w={40} aria-label="Templates"><Icon name="grid" w={24} /></BarButton>
    <BarDivider />
    <BarButton $w={39} aria-label="Alert"><Icon name="alarmPlus" w={23} /></BarButton>
    <BarButton $w={37} aria-label="Replay"><Icon name="rewind" w={23} /></BarButton>
    <BarDivider />
    <BarButton $w={37} aria-label="Undo"><Icon name="undo" w={21} /></BarButton>
    <BarButton $w={38} $dim aria-label="Redo"><Icon name="redo" w={21} /></BarButton>
    <BarButton $w={38} aria-label="Layout"><Icon name="square" w={25} /></BarButton>
    <LayoutName>Unnamed<SaveText>Save</SaveText></LayoutName>
    <BarButton $w={24} aria-label="Manage layouts"><Icon name="chevron" w={24} /></BarButton>
    <BarDivider />
    <Spacer />
    <BarButton $w={38} aria-label="Quick search"><Icon name="quick" w={23} /></BarButton>
    <BarButton $w={38} aria-label="Settings"><Icon name="hex" w={25} /></BarButton>
    <BarButton $w={38} aria-label="Fullscreen"><Icon name="full" w={24} /></BarButton>
    <BarButton $w={16} aria-label="Snapshot"><Icon name="camera" w={22} /></BarButton>
    <Trade>Trade</Trade>
    <Publish>Publish</Publish>
  </TopBar>
);

const DrawingTools = () => (
  <LeftTools>
    {["cross", "trend", "fib", "pattern", "measure", "brush", "textAnchor", "smile"].map((n, i) => (
      <ToolSlot key={n}><Tool $on={i === 0} aria-label={n}><Icon name={n} w={i === 0 ? 28 : 27} /></Tool></ToolSlot>
    ))}
    <Rule />
    {["ruler", "zoom"].map((n) => <ToolSlot key={n}><Tool aria-label={n}><Icon name={n} w={27} /></Tool></ToolSlot>)}
    <Rule />
    {["magnet", "pencilLock", "lock", "eye"].map((n) => <ToolSlot key={n}><Tool aria-label={n}><Icon name={n} w={26} /></Tool></ToolSlot>)}
  </LeftTools>
);

const PlotDrawing = () => (
  <PlotSvg role="img" aria-label="US 100 Cash CFD four hour candles">
    <g transform="translate(-56 -129)">
      <g stroke="#000" strokeOpacity="0.050">
        {priceTicks.map((p, i) => { const y = Math.round(169 + i * 32.6) + 0.5; return <path key={p} d={`M56 ${y}H3000`} />; })}
        <path d="M56 594.500H3000" />
        {timeTicks.map(([x]) => <path key={x} d={`M${x + 0.5} 129V1000`} />)}
      </g>
      <rect x="56" y="566" width="652" height="8" fill="#c9c9c9" />
      <path d="M56 562.500h652M56 565.500h652M56 574.500h652" stroke="#e6b9bd" strokeOpacity="0.400" />
      <path d="M56 338.500H3000" stroke="#70747c" strokeDasharray="1 2" />
      <g shapeRendering="crispEdges">
        {candles.map(([x, wt, bt, bb, wb, up, soft]) => (
          <g key={x}>
            <rect x={x} y={wt} width={soft ? 2 : 1} height={wb - wt} fill={soft ? "#000" : "#222"} fillOpacity={soft ? 0.22 : 1} />
            <rect x={x - 1} y={bt} width="3" height={Math.max(bb - bt, 1)} fill={up ? (soft ? "#5683e0" : "#3578dc") : "#000"} />
          </g>
        ))}
      </g>
      <g stroke="#000" strokeWidth="2">
        <path d="M643 438H790M813 438H3000M621 540H779M807 540H3000" />
      </g>
      <rect x="664" y="338" width="3" height="217" fill="#3b78dc" />
      <g fontSize="12" fontStyle="italic" fill="#000" textAnchor="middle">
        <text x="803" y="442">eq</text>
        <text x="793" y="544">pdl</text>
      </g>
      <circle cx="665.500" cy="592.500" r="10" fill="#fff" stroke="#7b1fa2" strokeWidth="1.500" />
      <path d="m668 586-6 7h3.500l-2 6 6-7H666Z" fill="#7b1fa2" />
      <circle cx="672.500" cy="585.500" r="3" fill="#d3224f" stroke="#fff" />
    </g>
  </PlotSvg>
);

const Chart = () => (
  <ChartColumn>
    <Stage>
      <Plot>
        <PlotDrawing />
        <Legend>
          <LegendTitle><Badge $fill="#1795a8" $d={17}>100</Badge>US 100 Cash CFD · 4h · FOREX.com</LegendTitle>
          <MarketDot />
          <Approx>≈</Approx>
          <Ohlc><span>O23,721.3</span><span>H24,551.8</span><span>L23,605.6</span><span>C24,385.7</span><span>+664.4 (+2.80%)</span></Ohlc>
        </Legend>
        <OrderRow>
          <OrderButton $tone="#c8102e"><OrderPrice>24,385.8</OrderPrice>SELL</OrderButton>
          <Spread>30</Spread>
          <OrderButton $tone="#2146c8"><OrderPrice>24,388.8</OrderPrice>BUY</OrderButton>
        </OrderRow>
        <Collapse aria-label="Hide indicators"><Icon name="chevron" w={24} /></Collapse>
        <Note>runs about 946 pips<br />wow</Note>
        <NameTag>NAS100</NameTag>
        <Brand href="#tradingview"><Mark w={30} />TradingView</Brand>
      </Plot>
      <PriceAxis>
        <Currency aria-label="Currency" defaultValue="USD"><option>USD</option></Currency>
        <CurrencyArrow><Icon name="chevron" w={16} /></CurrencyArrow>
        <PriceTicks>{priceTicks.map((p) => <PriceTick key={p}>{priceText(p)}</PriceTick>)}</PriceTicks>
        <PriceTag $top={200} $fill="#3a76f0">24,385.7<Countdown>04:47</Countdown></PriceTag>
        <PriceTag $top={300} $fill="#000">24,077.7</PriceTag>
        <PriceTag $top={402} $fill="#000">23,764.8</PriceTag>
        <ResizeCursor width="12" height="24" viewBox="0 0 12 24" fill="#fff" stroke="#777" aria-hidden="true"><path d="M6 1 1.500 6H5v12H1.500L6 23l4.500-5H7V6h3.500Z" /></ResizeCursor>
        <ScaleModes><ScaleMode>A</ScaleMode><ScaleMode>L</ScaleMode></ScaleModes>
      </PriceAxis>
    </Stage>
    <TimeAxis>
      <TimeSvg>
        {timeTicks.map(([x, t]) => <text key={x} x={x - 56} y="18" textAnchor="middle" fontWeight={t.length > 2 ? 600 : 400}>{t}</text>)}
      </TimeSvg>
      <TimeSettings aria-label="Time axis settings"><Icon name="hex" w={18} /></TimeSettings>
    </TimeAxis>
    <RangeBar>
      <PlainButton>1D</PlainButton>
      <PlainButton>5D</PlainButton>
      <Spacer />
      <PlainButton>08:55:13 UTC-4</PlainButton>
      <Favorites>
        <Grip viewBox="0 0 17 16">{[1, 7, 13].map((y) => <g key={y}><circle cx="2.500" cy={y + 1} r="1" /><circle cx="8.500" cy={y + 1} r="1" /></g>)}</Grip>
        {favorites.map((n) => <Favorite key={n} aria-label={n}><Icon name={n} w={25} /></Favorite>)}
      </Favorites>
    </RangeBar>
  </ChartColumn>
);

const Watchlist = () => (
  <Watch>
    <WatchHead>
      <WatchName>Wat...<Icon name="chevron" w={24} /></WatchName>
      <WatchButton aria-label="Add symbol"><Icon name="plus" w={25} /></WatchButton>
      <WatchButton aria-label="Table view"><Icon name="sheet" w={24} /></WatchButton>
      <WatchButton aria-label="More"><Icon name="dots" w={21} /></WatchButton>
    </WatchHead>
    <Quotes>
      <colgroup><col width="56" /><col width="39" /><col width="40" /><col /></colgroup>
      <thead>
        <HeadRow>
          <th>
            <ColumnFlag width="11" height="12" viewBox="0 0 11 12" aria-hidden="true"><path d="M0 0h11L8 6l3 6H0Z" fill="#d4d4d4" /></ColumnFlag>
            <Clip $w={21} $x={4}>Symbol</Clip>
          </th>
          <th><Clip $w={19} $x={11}>Last</Clip></th>
          <th><Clip $w={16} $x={11}>Chg</Clip></th>
          <th><Clip $w={34} $x={17}>Chg%</Clip></th>
        </HeadRow>
        <tr aria-hidden="true"><td colSpan={4} height="6" /></tr>
      </thead>
      <tbody>
        {groups.map((g, i) => (
          <GroupRow key={g.name} $last={i === groups.length - 1}>
            <th colSpan={4}><GroupToggle><Icon name={g.open ? "chevron" : "chevronRight"} w={19} />{g.name}</GroupToggle></th>
          </GroupRow>
        ))}
        {quotes.map((q, i) => (
          <QuoteRow key={i} $selected={q.selected} $tone={q.tone}>
            <td><SymbolCell><Badge $fill={q.fill} $d={18}>{q.badge || <Ingots />}</Badge>{q.delayed ? <Delayed>D</Delayed> : <Clip $w={9}>{q.symbol}</Clip>}</SymbolCell></td>
            <td><Clip $w={31}>{q.last}</Clip></td>
            <td><Clip $w={28}>{q.chg}</Clip></td>
            <td>{q.pct}</td>
          </QuoteRow>
        ))}
      </tbody>
    </Quotes>
    <Handle aria-label="Collapse panel"><Icon name="chevronRight" w={12} /></Handle>
    <WatchFoot>
      <Badge $fill="#1795a8" $d={24}>100</Badge>
      <FootName>N..</FootName>
      <WatchButton aria-label="Layout"><Icon name="grid" w={26} /></WatchButton>
      <WatchButton aria-label="Notes"><Icon name="edit" w={25} /></WatchButton>
      <WatchButton aria-label="More"><Icon name="dots" w={21} /></WatchButton>
    </WatchFoot>
  </Watch>
);

const SideTools = () => (
  <RightTools>
    {["list", "alarm", "layers", "chat", "target", "pyramid", "calendar", "feed", "bell"].map((n, i) => (
      <SideSlot key={n} $gap={i === 4}><SideTool $on={i === 0} aria-label={n}><Icon name={n} w={n === "target" ? 28 : 26} /></SideTool></SideSlot>
    ))}
    <SideSlot>
      <SideTool $dark aria-label="Apps">
        <svg width="20" height="20" viewBox="0 0 20 20" fill="#fff">{[1, 8, 15].map((y) => [1, 8, 15].map((x) => <rect key={`${x}-${y}`} x={x} y={y} width="4" height="4" rx="1" />))}</svg>
      </SideTool>
    </SideSlot>
    <Spacer />
    <Rule $tight />
    <SideSlot><SideTool aria-label="Help"><Icon name="help" w={29} /></SideTool></SideSlot>
  </RightTools>
);

const OsBar = () => (
  <TaskBar>
    <TaskGroup>
      <PlainButton aria-label="Start">
        <svg width="24" height="24" viewBox="0 0 24 24"><defs><linearGradient id="win" x1="0" y1="0" x2="1" y2="1"><stop offset="0" stopColor="#4cc3f0" /><stop offset="1" stopColor="#0a6cc0" /></linearGradient></defs><path d="M0 0h11.500v11.500H0ZM12.500 0H24v11.500H12.500ZM0 12.500h11.500V24H0ZM12.500 12.500H24V24H12.500Z" fill="url(#win)" /></svg>
      </PlainButton>
      <SearchBox>
        <svg width="14" height="14" viewBox="0 0 14 14" fill="none" stroke="#222" strokeWidth="1.500" aria-hidden="true"><circle cx="5.500" cy="5.500" r="4.700" /><path d="m9 9 4.500 4.500" /></svg>
        Search
      </SearchBox>
      <TaskApp $on aria-label="Chrome">
        <svg width="24" height="24" viewBox="0 0 24 24"><circle cx="12" cy="12" r="12" fill="#f5c02c" /><path d="M1.600 6A12 12 0 0 1 22.400 6L12 6.500l-5.200 8.500Z" fill="#d4382c" /><path d="M1.600 6A12 12 0 0 0 11 24l6.200-9-10.400 0Z" fill="#2f9a4a" /><circle cx="12" cy="12" r="5.800" fill="#fff" /><circle cx="12" cy="12" r="4.600" fill="#2f70e0" /></svg>
      </TaskApp>
      <TaskApp aria-label="OBS">
        <svg width="28" height="28" viewBox="0 0 28 28"><circle cx="13" cy="15" r="10" fill="#1c1c1e" /><path d="M10 7.500c-1.500 3.500 0 6 3 7.500 3.500-.5 6.500.5 7.500 4M13 15c-2.500 2-3 5-1 7.500M13 15c-4 1.500-7 .5-8.500-2" fill="none" stroke="#a9a9ac" strokeWidth="1.100" /><circle cx="22.500" cy="6" r="6" fill="#e01010" /></svg>
      </TaskApp>
    </TaskGroup>
    <Tray>
      <TrayIcon $w={30} aria-label="Show hidden icons"><Icon name="chevronUp" w={20} /></TrayIcon>
      <TrayIcon $w={32} aria-label="Cloud sync off">
        <svg width="18" height="15" viewBox="0 0 18 15" fill="#b9bdc6" stroke="#222" strokeWidth="1.200"><path d="M4 13.500h10a3.200 3.200 0 0 0 .5-6.400C14 3.500 11.500 2 9 2 6.500 2 4.500 4 4 6.500a3.500 3.500 0 0 0 0 7ZM2 1l14 13.500" /></svg>
      </TrayIcon>
      <TrayIcon $w={32} aria-label="Microphone and location">
        <svg width="22" height="18" viewBox="0 0 22 18" fill="none" stroke="#2b46b8" strokeWidth="1.300"><rect x="3.500" y="1" width="4" height="7" rx="2" fill="#9fb2ee" /><path d="M1 6c0 6 9 6 9 0M5.500 10.500V13M20 8l-8 4 4 1 1.500 4Z" /></svg>
      </TrayIcon>
      <TrayText $w={46}>ENG<br />IN</TrayText>
      <TrayIcon $w={28} aria-label="Wi-Fi">
        <svg width="17" height="14" viewBox="0 0 17 14" fill="none" stroke="#222" strokeWidth="1.300"><path d="M1 5c4-5 11-5 15 0M3.500 7.500c3-3.300 7-3.300 10 0M6 10c1.500-1.600 3.500-1.600 5 0" /><circle cx="8.500" cy="12" r="1" fill="#222" /></svg>
      </TrayIcon>
      <TrayIcon $w={22} aria-label="Volume">
        <svg width="17" height="14" viewBox="0 0 17 14" fill="none" stroke="#222" strokeWidth="1.200"><path d="M1 5h2.500L7 1.500v11L3.500 9H1ZM9.500 4.500c1.500 1.500 1.500 3.500 0 5M11.500 3c2.500 2.500 2.500 5.500 0 8M13.500 1.500c3.300 3.300 3.300 7.700 0 11" /></svg>
      </TrayIcon>
      <TrayIcon $w={30} aria-label="Battery">
        <svg width="20" height="11" viewBox="0 0 20 11" fill="none" stroke="#222" strokeWidth="1.300"><rect x="1" y="1" width="16" height="9" rx="2.500" /><path d="M18.800 4v3" /><rect x="3" y="3" width="5" height="5" fill="#222" stroke="none" /></svg>
      </TrayIcon>
      <TrayText $w={74} $end>18:25<br />23-03-2026</TrayText>
      <TrayIcon $w={30} aria-label="Notifications snoozed">
        <svg width="16" height="17" viewBox="0 0 16 17" fill="#222"><path d="M6.500 2C3 2 2 5 2 7v3l-1.500 3h12L11 10V8M4.500 14h4c0 2.500-4 2.500-4 0Z" /><path d="M5 6.500h3l-3 3.500h3" fill="none" stroke="#fff" /><path d="M11 1h3.500L11 5h3.500" fill="none" stroke="#222" strokeWidth="1.300" /></svg>
      </TrayIcon>
    </Tray>
  </TaskBar>
);

export default function App() {
  return (
    <Shell>
      <Global />
      <BrowserChrome />
      <AppBar />
      <Body>
        <DrawingTools />
        <Chart />
        <Watchlist />
        <SideTools />
      </Body>
      <OsBar />
    </Shell>
  );
}
